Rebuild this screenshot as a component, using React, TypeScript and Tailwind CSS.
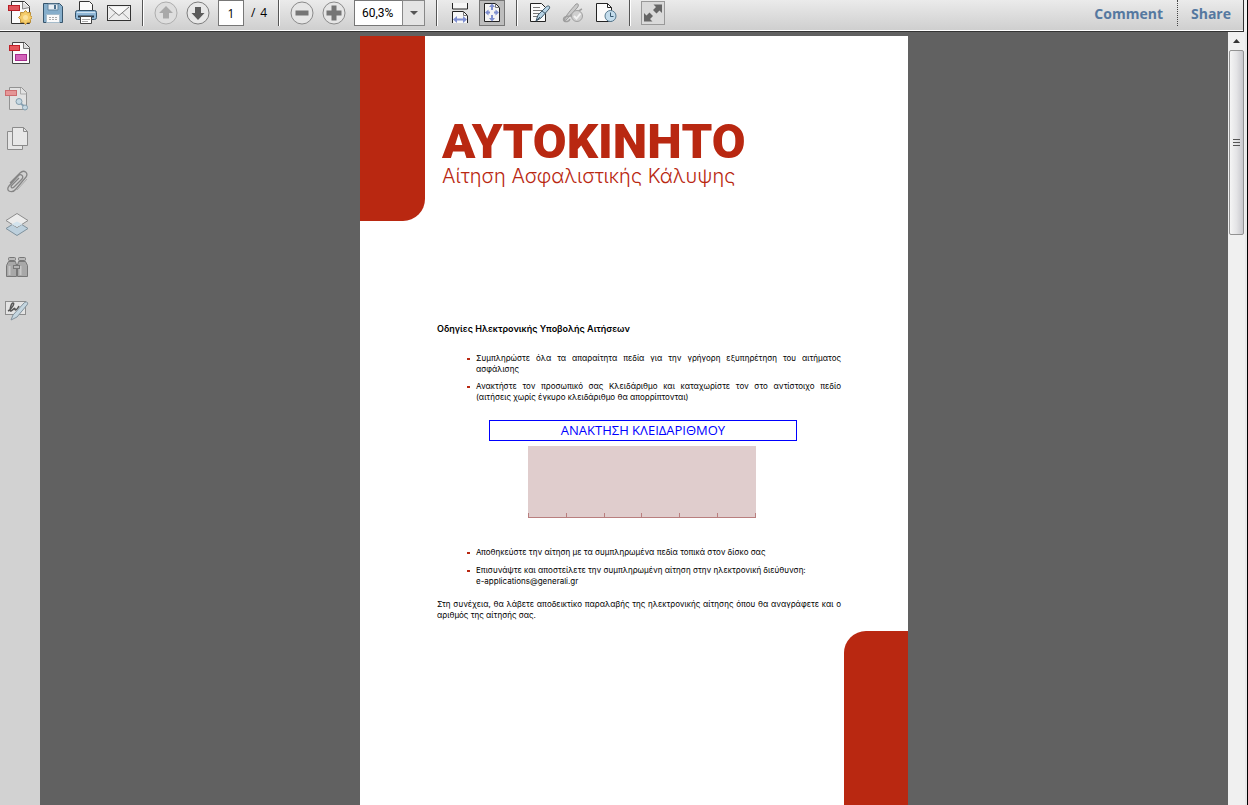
import React, { useState } from "react";

interface IconProps {
  children: React.ReactNode;
  wide?: boolean;
}

const Icon: React.FC<IconProps> = ({ children, wide }) => (
  <svg
    viewBox={wide ? "0 0 28 24" : "0 0 24 24"}
    className={wide ? "h-6 w-7" : "h-6 w-6"}
    fill="none"
    aria-hidden="true"
  >
    {children}
  </svg>
);

const CreatePdfIcon = () => (
  <Icon>
    <path d="M3.5 0.5h13l5 5v17h-18z" fill="#fbfbfb" stroke="#333" />
    <path d="M14.5 1v7l7-1.5" fill="#ddd" stroke="#888" />
    <rect x="0.5" y="4.5" width="11" height="5" fill="#e0555b" stroke="#b81e26" />
    <path
      d="M17.5 9.5l2 2.2 3-.2-.2 3 2 2-2 2 .2 3-3-.2-2 2.2-2-2.2-3 .2.2-3-2.2-2 2.2-2-.2-3 3 .2z"
      fill="#f5cd6b"
      stroke="#b98a2e"
    />
    <circle cx="17.5" cy="16.5" r="2.5" fill="#fbe3a0" />
  </Icon>
);

const SaveIcon = () => (
  <Icon>
    <path d="M2.5 2.5h16l3 3v16h-19z" fill="#86aecb" stroke="#36546b" />
    <path d="M7 3h10v6h-10z" fill="#e9eff4" stroke="#6486a0" />
    <path d="M13 4h2v4h-2z" fill="#4b6f8c" />
    <path d="M5.5 13.5h13v8h-13z" fill="#fafafa" stroke="#a6bccb" />
    <path d="M8 16.5h9M8 18.5h9" stroke="#aaa" strokeDasharray="2 1" />
  </Icon>
);

const PrintIcon = () => (
  <Icon>
    <path d="M5.5 10.5v-10h10l3 3v7z" fill="#fafafa" stroke="#333" />
    <rect x="1.5" y="9.5" width="21" height="9" rx="2" fill="#8fb7d7" stroke="#34536b" />
    <path d="M3 11.5h18" stroke="#cfe2f0" />
    <path d="M4 15.5h16" stroke="#26394a" strokeWidth="2" />
    <path d="M6.5 15.5h11v7h-11z" fill="#fff" stroke="#444" />
    <path d="M8 18.5h8M8 20.5h6" stroke="#aaa" />
  </Icon>
);

const MailIcon = () => (
  <Icon>
    <rect x="0.5" y="4.5" width="23" height="15" fill="#ededed" stroke="#333" />
    <path d="M2 18l7.5-7M22 18l-7.5-7" stroke="#9a9a9a" />
    <path d="M2 6l10 8.5L22 6" fill="#f8f8f8" stroke="#777" />
  </Icon>
);

const ArrowUpIcon = () => (
  <Icon>
    <circle cx="12" cy="12" r="11" fill="#dedede" stroke="#adadad" />
    <path d="M12 5l7 7h-4v5.5h-6V12H5z" fill="#a9a9a9" />
  </Icon>
);

const ArrowDownIcon = () => (
  <Icon>
    <circle cx="12" cy="12" r="11" fill="#e8e8e8" stroke="#7d7d7d" />
    <path d="M12 19l6.5-7h-3.5V6h-6v6H5.5z" fill="#5c5c5c" />
  </Icon>
);

const MinusIcon = () => (
  <Icon>
    <circle cx="12" cy="12" r="11" fill="#e6e6e6" stroke="#8a8a8a" />
    <path d="M5.5 9.5h13v5h-13z" fill="#757575" />
  </Icon>
);

const PlusIcon = () => (
  <Icon>
    <circle cx="12" cy="12" r="11" fill="#e6e6e6" stroke="#8a8a8a" />
    <path d="M9.5 4.5h5v5h5v5h-5v5h-5v-5h-5v-5h5z" fill="#757575" />
  </Icon>
);

const FitWidthIcon = () => (
  <Icon>
    <path d="M4.5 2v6h15V2" fill="#f6f6f6" stroke="#222" />
    <path d="M4.5 22V10.5h11l4 4V22" fill="#f6f6f6" stroke="#222" />
    <path d="M15.5 10.5v4h4" stroke="#777" />
    <path d="M7 18.5h10" stroke="#7f8fd0" strokeWidth="2" />
    <path d="M5 18.5l4-3.500v7zM19 18.5l-4-3.500v7z" fill="#7f8fd0" />
  </Icon>
);

const FitPageIcon = () => (
  <Icon>
    <path d="M4.5 2.5h11l4 4v14h-15z" fill="#f3f3f3" stroke="#222" />
    <path d="M15.5 2.5v4h4" stroke="#777" />
    <path d="M12 5v4M12 14v4M7 11.5h3M14 11.5h3" stroke="#7f8fd0" strokeWidth="2" />
    <path
      d="M12 2.5l3 3.500H9zM12 20.5l3-3.500H9zM5 11.5l3.500-3v6zM19 11.5l-3.500-3v6z"
      fill="#7f8fd0"
    />
  </Icon>
);

const EditIcon = () => (
  <Icon>
    <path d="M2.5 2.5h11l4 4v14h-15z" fill="#fafafa" stroke="#222" />
    <path d="M5 6.5h7M5 9.5h9M5 12.5h7M5 15.5h5" stroke="#777" />
    <path d="M8 20l2-6 8-8c2-2 5-1 3 2l-8 9z" fill="#b7d3e5" stroke="#435b6b" />
    <path d="M14 10l4 3M8 20l4-4" stroke="#435b6b" />
  </Icon>
);

const SignIcon = () => (
  <Icon>
    <path d="M3 20c2-6 6-10 12-17 3-1 3 2 1 4L5 19z" fill="#c9c9c9" stroke="#9a9a9a" />
    <path d="M3 20c-2-4 3-5 7-5M9 14c5 1 9-5 12-6M3 20c2 1 5 1 6-2" stroke="#9f9f9f" strokeWidth="1.5" />
    <circle cx="16" cy="15" r="5.5" fill="#cfcfcf" stroke="#a2a2a2" />
    <path d="M13 15l2.5 2.5 4-5" stroke="#f2f2f2" strokeWidth="2" />
  </Icon>
);

const ClockIcon = () => (
  <Icon>
    <path d="M2.5 2.5h11l4 4v14h-15z" fill="#fafafa" stroke="#222" />
    <path d="M13.5 2.5v4h4" stroke="#222" />
    <circle cx="16.5" cy="15" r="5.5" fill="#c3dcec" stroke="#587a90" />
    <path d="M16.5 11.5v4h3" stroke="#35566e" />
  </Icon>
);

const ExpandIcon = () => (
  <Icon>
    <rect x="0.5" y="0.5" width="23" height="23" fill="#dadada" stroke="#999" />
    <path
      d="M12.5 3.5h8.5v8.5l-2.5-2.5-3 3-3.5-3.5 3-3zM11.5 20.5H3V12l2.5 2.5 3-3 3.5 3.5-3 3z"
      fill="#666"
    />
  </Icon>
);

const FormIcon = () => (
  <Icon wide>
    <path d="M7.5 0.5h12l5 5v16h-17z" fill="#fafafa" stroke="#444" />
    <path d="M18.5 1v5.5h6" fill="#ddd" stroke="#777" />
    <rect x="4.5" y="3.5" width="10" height="5" fill="#e4555a" stroke="#c01f27" />
    <rect x="10.5" y="12.5" width="11" height="6" fill="#d263b9" stroke="#a52b8c" />
  </Icon>
);

const InspectIcon = () => (
  <Icon wide>
    <path d="M4.5 0.5h12l5 5v17h-17z" fill="#e2e2e2" stroke="#929292" />
    <path d="M15.5 1v6h6" stroke="#aaa" />
    <rect x="0.5" y="3.5" width="11" height="5" fill="#e59697" stroke="#cc6c6f" />
    <path d="M14 15l6 5" stroke="#86a0b2" strokeWidth="2" />
    <circle cx="14" cy="14.5" r="3" fill="#c5d8e3" stroke="#839cab" />
    <circle cx="20" cy="20.5" r="2.5" fill="#c5d8e3" stroke="#839cab" />
  </Icon>
);

const PagesIcon = () => (
  <Icon wide>
    <path d="M2.5 4.5h15v18h-15z" fill="#e6e6e6" stroke="#8b8b8b" />
    <path d="M7.5 0.5h11l4 4v14h-15z" fill="#e8e8e8" stroke="#8b8b8b" />
    <path d="M18.5 0.5v4h4" stroke="#8b8b8b" />
  </Icon>
);

const ClipIcon = () => (
  <Icon wide>
    <path
      d="M5 13L15 3c4-4 9 0 6 4L11 19c-4 5-11 2-7-3l9-10c3-3 6 0 4 3l-8 8c-2 2-4 0-2-2l7-7"
      stroke="#858585"
      strokeWidth="1.3"
    />
    <path d="M12 20l10-11" stroke="#aaa" />
  </Icon>
);

const LayersIcon = () => (
  <Icon wide>
    <path d="M12 8.5l11 7-11 7-11-7z" fill="#bdd0dd" stroke="#7f919d" />
    <path d="M12 0.5l11 7-11 7-11-7z" fill="#ececec" stroke="#8c8c8c" />
    <path d="M12 8.5l5.5 2.800L12 14 6.500 11.300z" fill="#d3e3ed" />
  </Icon>
);

const BinocularsIcon = () => (
  <Icon wide>
    <path d="M9 8.5h6v5H9z" fill="#999" stroke="#777" />
    <path d="M3.5 5.5h7l1 4v11h-10v-11z" fill="#a8a8a8" stroke="#777" />
    <path d="M13.5 5.5h7l2 4v11h-10v-11z" fill="#a8a8a8" stroke="#777" />
    <rect x="3.5" y="1.5" width="7" height="3" rx="1" fill="#bbb" stroke="#777" />
    <rect x="13.5" y="1.5" width="7" height="3" rx="1" fill="#bbb" stroke="#777" />
    <path d="M4.5 10v9M15.5 10v9" stroke="#c6c6c6" strokeWidth="2" />
    <rect x="8.5" y="9.500" width="6" height="3" fill="#b4b4b4" stroke="#777" />
  </Icon>
);

const SignatureIcon = () => (
  <Icon wide>
    <rect x="0.5" y="2.5" width="20" height="13" fill="#e4e4e4" stroke="#8d8d8d" />
    <path d="M3 12c4-2 7-8 5-8s-4 9-2 8 4-4 4-2 2 1 4-3" stroke="#555" strokeWidth="1.5" />
    <path d="M6 21l2-5L19 4c2-2 5-1 3 2L12 18z" fill="#c5d6e0" stroke="#83929c" />
  </Icon>
);

interface ToolProps {
  label: string;
  icon: React.ReactNode;
  disabled?: boolean;
}

const Tool: React.FC<ToolProps> = ({ label, icon, disabled }) => (
  <button type="button" aria-label={label} title={label} disabled={disabled}>
    {icon}
  </button>
);

const Separator = () => (
  <div className="mr-[10px] ml-[11px] h-[26px] w-[2px] shrink-0 border-l border-[#555] bg-white" />
);

const sidebarTools = [
  { label: "Form", icon: <FormIcon />, gap: "mb-[21px]" },
  { label: "Inspect", icon: <InspectIcon />, gap: "mb-4" },
  { label: "Pages", icon: <PagesIcon />, gap: "mb-[19px]" },
  { label: "Attachments", icon: <ClipIcon />, gap: "mb-[19px]" },
  { label: "Layers", icon: <LayersIcon />, gap: "mb-[19px]" },
  { label: "Search", icon: <BinocularsIcon />, gap: "mb-[19px]" },
  { label: "Signatures", icon: <SignatureIcon />, gap: "" },
];

const Toolbar = () => {
  const [page, setPage] = useState("1");

  return (
    <header className="mr-[3px] h-8 shrink-0 border-r border-b border-[#333] bg-linear-to-b from-[#ebebeb] to-[#cecece] font-['Open_Sans',sans-serif]">
      <div className="flex h-[31px] items-start border-b border-white pl-2">
        <div className="flex h-[26px] items-center">
          <div className="flex gap-[9px]">
            <Tool label="Create PDF" icon={<CreatePdfIcon />} />
            <Tool label="Save" icon={<SaveIcon />} />
            <Tool label="Print" icon={<PrintIcon />} />
            <Tool label="Email" icon={<MailIcon />} />
          </div>
          <Separator />
          <div className="flex items-center gap-2">
            <Tool label="Previous page" icon={<ArrowUpIcon />} disabled />
            <Tool label="Next page" icon={<ArrowDownIcon />} />
            <input
              type="text"
              aria-label="Page number"
              value={page}
              onChange={(e) => setPage(e.target.value)}
              className="h-[26px] w-[26px] border border-[#777] bg-white text-center text-xs text-black"
            />
          </div>
          <span className="ml-[7px] flex w-4 justify-between text-xs text-black">
            <span>/</span> <span>4</span>
          </span>
          <Separator />
          <div className="flex items-center gap-2">
            <Tool label="Zoom out" icon={<MinusIcon />} />
            <Tool label="Zoom in" icon={<PlusIcon />} />
            <div className="relative">
              <select
                aria-label="Zoom level"
                className="block h-[26px] w-[71px] appearance-none border border-[#777] bg-white pl-[7px] font-[Roboto,sans-serif] text-xs text-black"
              >
                <option>60,3%</option>
              </select>
              <span className="pointer-events-none absolute top-0 right-0 flex h-[26px] w-[23px] items-center justify-center border border-[#888] bg-[#e4e4e4]">
                <svg viewBox="0 0 8 4" className="h-1 w-2" aria-hidden="true">
                  <path d="M0 0h8L4 4z" fill="#555" />
                </svg>
              </span>
            </div>
          </div>
          <Separator />
          <div className="flex items-center gap-[7px]">
            <Tool label="Fit width" icon={<FitWidthIcon />} />
            <button
              type="button"
              aria-label="Fit page"
              aria-pressed="true"
              className="flex h-[26px] w-[26px] items-center justify-center border border-[#777] bg-[#bdbdbd]"
            >
              <FitPageIcon />
            </button>
          </div>
          <Separator />
          <div className="flex gap-[9px]">
            <Tool label="Edit" icon={<EditIcon />} />
            <Tool label="Sign" icon={<SignIcon />} disabled />
            <Tool label="History" icon={<ClockIcon />} />
          </div>
          <Separator />
          <Tool label="Full screen" icon={<ExpandIcon />} />
        </div>
        <div className="ml-auto flex h-7 text-sm font-bold text-[#5578a0]">
          <button type="button" className="px-[14px]">
            Comment
          </button>
          <div className="h-[26px] border-l border-dotted border-[#444]" />
          <button type="button" className="pr-3 pl-[13px]">
            Share
          </button>
        </div>
      </div>
    </header>
  );
};

const Bullet: React.FC<{ children: React.ReactNode }> = ({ children }) => (
  <li className="flex">
    <span className="mt-[5px] mr-[6px] h-[2px] w-[3px] shrink-0 bg-[#b92811]" />
    <div className="flex-1">{children}</div>
  </li>
);

const KeyField = () => (
  <div className="mt-[5px] ml-[39px] flex h-[72px] w-[228px] flex-col bg-[#e0cdcd]">
    <input
      type="text"
      aria-label="Κλειδάριθμος"
      maxLength={6}
      className="min-h-0 w-full flex-1 bg-transparent px-3 text-center text-2xl outline-none"
    />
    <div className="grid h-[5px] grid-cols-6 border-r border-b border-[#b97f7f]">
      {[1, 2, 3, 4, 5, 6].map((cell) => (
        <span key={cell} className="border-l border-[#b97f7f]" />
      ))}
    </div>
  </div>
);

const DocumentPage = () => (
  <article className="mx-auto mt-1 flex w-[548px] flex-col bg-white font-[Inter,sans-serif] text-black">
    <div className="flex">
      <div className="h-[185px] w-[65px] rounded-br-[22px] bg-[#b92811]" />
      <div className="pt-[82px] pl-[17px] text-[#b92811]">
        <h1 className="font-[Roboto,sans-serif] text-[49px] leading-[48px] font-black">ΑΥΤΟΚΙΝΗΤΟ</h1>
        <p className="text-[20px] leading-[20px] font-light">Αίτηση Ασφαλιστικής Κάλυψης</p>
      </div>
    </div>
    <div className="mt-[101px] mr-[67px] ml-[77px] text-[8px] leading-[11px]">
      <h2 className="text-[9px] leading-[14px] font-semibold">Οδηγίες Ηλεκτρονικής Υποβολής Αιτήσεων</h2>
      <ul className="mt-[17px] ml-[30px] flex flex-col gap-[6px]">
        <Bullet>
          <span className="block [text-align-last:justify]">
            Συμπληρώστε όλα τα απαραίτητα πεδία για την γρήγορη εξυπηρέτηση του αιτήματος
          </span>
          <span className="block">ασφάλισης</span>
        </Bullet>
        <Bullet>
          <span className="block [text-align-last:justify]">
            Ανακτήστε τον προσωπικό σας Κλειδάριθμο και καταχωρίστε τον στο αντίστοιχο πεδίο
          </span>
          <span className="block">(αιτήσεις χωρίς έγκυρο κλειδάριθμο θα απορρίπτονται)</span>
        </Bullet>
      </ul>
      <div className="mt-[17px] mr-[44px] ml-[52px]">
        <button
          type="button"
          className="block h-[21px] w-full border border-[#0000ff] bg-white font-['Open_Sans',sans-serif] text-[13px] leading-[19px] text-[#0000ff]"
        >
          ΑΝΑΚΤΗΣΗ ΚΛΕΙΔΑΡΙΘΜΟΥ
        </button>
        <KeyField />
      </div>
      <ul className="mt-[29px] ml-[30px] flex flex-col gap-[7px]">
        <Bullet>Αποθηκεύστε την αίτηση με τα συμπληρωμένα πεδία τοπικά στον δίσκο σας</Bullet>
        <Bullet>
          <span className="block">
            Επισυνάψτε και αποστείλετε την συμπληρωμένη αίτηση στην ηλεκτρονική διεύθυνση:
          </span>
          <span className="block">e-applications@generali.gr</span>
        </Bullet>
      </ul>
      <p className="mt-3">
        <span className="block [text-align-last:justify]">
          Στη συνέχεια, θα λάβετε αποδεικτίκο παραλαβής της ηλεκτρονικής αίτησης όπου θα αναγράφετε και ο
        </span>
        <span className="block">αριθμός της αίτησής σας.</span>
      </p>
    </div>
    <div className="mt-[10px] h-[180px] w-[64px] self-end rounded-tl-[22px] bg-[#b92811]" />
  </article>
);

const ScrollBar = () => (
  <div className="flex w-[17px] shrink-0 flex-col items-center bg-[#f0f0f0]">
    <button type="button" aria-label="Scroll up" className="flex h-[18px] w-full items-center justify-center">
      <svg viewBox="0 0 7 4" className="h-1 w-[7px]" aria-hidden="true">
        <path d="M0 4h7L3.5 0z" fill="#333" />
      </svg>
    </button>
    <div className="flex h-[185px] w-[15px] flex-col items-center justify-center gap-[2px] rounded-xs border border-[#929292] bg-linear-to-r from-[#f5f5f5] via-[#e4e4e6] to-[#c8c8cd]">
      <span className="h-px w-[7px] bg-[#555]" />
      <span className="h-px w-[7px] bg-[#555]" />
      <span className="h-px w-[7px] bg-[#555]" />
    </div>
  </div>
);

const App: React.FC = () => {
  return (
    <div className="flex h-screen flex-col overflow-hidden border-r border-black bg-[#f0f0f0]">
      <Toolbar />
      <div className="flex min-h-0 flex-1">
        <nav className="w-10 shrink-0 bg-[#d2d2d2] pt-[10px] pl-[5px]" aria-label="Panels">
          {sidebarTools.map((tool) => (
            <div key={tool.label} className={`flex h-6 ${tool.gap}`}>
              <Tool label={tool.label} icon={tool.icon} />
            </div>
          ))}
        </nav>
        <main className="min-w-0 flex-1 overflow-hidden bg-[#616161]">
          <DocumentPage />
        </main>
        <ScrollBar />
        <div className="w-[2px] shrink-0 bg-[#e8e8e8]" />
      </div>
    </div>
  );
};

export default App;
